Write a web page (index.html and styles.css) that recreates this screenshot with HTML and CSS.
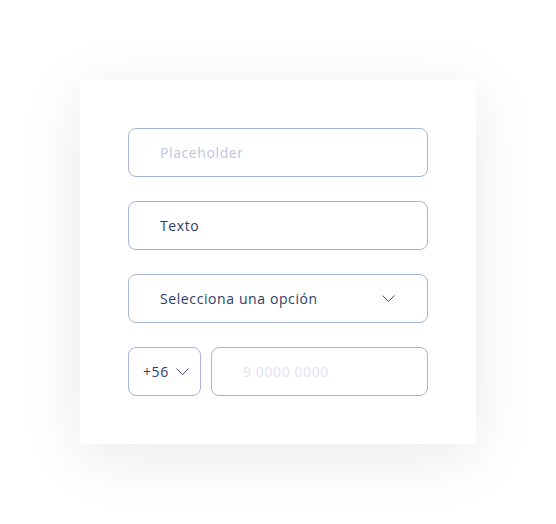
FILE: index.html
```html
<!DOCTYPE html>
<html lang="es">
<head>
  <meta charset="UTF-8">
  <meta name="viewport" content="width=device-width, initial-scale=1.0">
  <title>Formulario</title>
  <link rel="stylesheet" href="styles.css">
</head>
<body>
  <div class="card">
    <form class="form">
      <input type="text" class="field" placeholder="Placeholder" />
      <input type="text" class="field" value="Texto" />
      <div class="field select">
        <span>Selecciona una opción</span>
        <svg class="chevron" width="13" height="7" viewBox="0 0 13 7"><path d="M0.5 0.5L6.5 6.5L12.5 0.5" /></svg>
      </div>
      <div class="phone">
        <div class="field code">
          <span>+56</span>
          <svg class="chevron" width="13" height="7" viewBox="0 0 13 7"><path d="M0.5 0.5L6.5 6.5L12.5 0.5" /></svg>
        </div>
        <input type="tel" class="field number" placeholder="9 0000 0000" />
      </div>
    </form>
  </div>
</body>
</html>
```

FILE: styles.css
```css
body {
  font-family: "Open Sans", sans-serif;
  background-color: #fff;
  display: flex;
  justify-content: center;
  align-items: center;
  height: 100vh;
  margin: 0;
}
.card {
  width: 396px;
  box-sizing: border-box;
  background: #fff;
  padding: 48px;
  box-shadow: 0 12px 60px rgba(0, 0, 0, 0.09);
}
.form {
  display: flex;
  flex-direction: column;
  gap: 24px;
  margin: 0;
}
.field {
  box-sizing: border-box;
  width: 100%;
  height: 49px;
  padding: 0 31px;
  border: 1px solid #aab5d5;
  border-radius: 8px;
  background: #fff;
  font-family: inherit;
  font-size: 14px;
  letter-spacing: 0.6px;
  color: #2d3c68;
  outline: none;
}
.field::placeholder {
  color: #bec6dd;
}
.select {
  display: flex;
  align-items: center;
  justify-content: space-between;
  padding-right: 32px;
}
.chevron {
  fill: none;
  stroke: #3a4874;
  stroke-width: 1;
}
.phone {
  display: flex;
  gap: 10px;
}
.code {
  width: 73px;
  flex: none;
  padding: 0 11px 0 14px;
  display: flex;
  align-items: center;
  justify-content: space-between;
}
.number {
  flex: 1;
}
.number::placeholder {
  color: #e0e4ee;
}
```
